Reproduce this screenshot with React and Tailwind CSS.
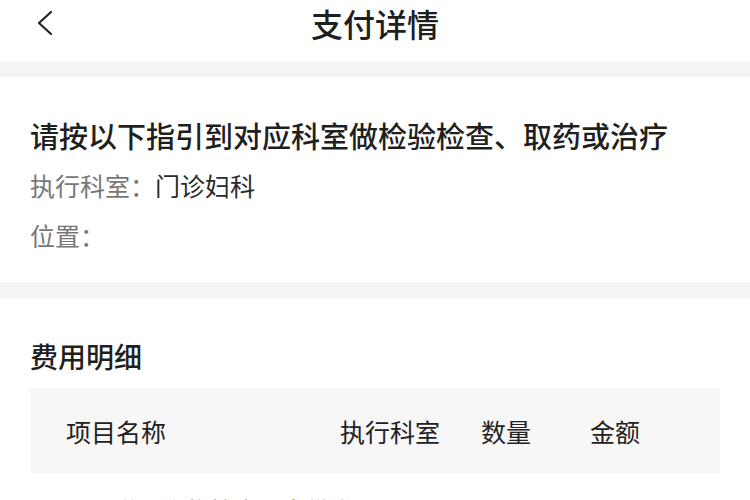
import React from 'react';

const font = { fontFamily: '"Noto Sans CJK SC", "Noto Sans", sans-serif' };

const Header = () => (
  <div className="relative h-[45px] mb-[17px] flex items-center justify-center">
    <svg
      className="absolute left-[36px] top-[10px]"
      width="18"
      height="26"
      viewBox="0 0 18 26"
      fill="none"
    >
      <path d="M15 2 L3 13 L15 24" stroke="#222" strokeWidth="2.2" strokeLinecap="round" strokeLinejoin="round" />
    </svg>
    <h1 className="text-[32px] leading-[40px] font-medium text-[#1f1f1f]">支付详情</h1>
  </div>
);

const Band = ({ h }) => <div className={`${h} bg-[#f4f4f4]`} />;

const Guide = () => (
  <div className="px-[30px] pt-[40px] pb-[29px]">
    <h2 className="text-[29px] leading-[36px] font-medium text-[#1f1f1f] whitespace-nowrap">
      请按以下指引到对应科室做检验检查、取药或治疗
    </h2>
    <p className="mt-[14px] text-[25px] leading-[36px] text-[#777]">
      执行科室：<span className="text-[#2a2a2a]">门诊妇科</span>
    </p>
    <p className="mt-[14px] text-[25px] leading-[36px] text-[#777]">位置：</p>
  </div>
);

const Fees = () => (
  <div className="px-[30px] pt-[40px]">
    <h2 className="text-[28px] leading-[36px] font-medium text-[#1f1f1f]">费用明细</h2>
    <div className="mt-[14px] h-[85px] bg-[#f7f7f7] px-[36px] grid grid-cols-[274px_141px_109px_1fr] items-center text-[25px] leading-[30px] text-[#222]">
      <span>项目名称</span>
      <span>执行科室</span>
      <span>数量</span>
      <span>金额</span>
    </div>
    <div className="pt-[22px] px-[60px] grid grid-cols-[503px_1fr] text-[24px] leading-[30px] text-[#666]">
      <span className="whitespace-nowrap">阴道分泌物检查（白带常规）</span>
      <span>12.00</span>
    </div>
  </div>
);

export default function App() {
  return (
    <div className="w-[750px] h-[500px] overflow-hidden bg-white" style={font}>
      <Header />
      <Band h="h-[15px]" />
      <Guide />
      <Band h="h-[16px]" />
      <Fees />
    </div>
  );
}
